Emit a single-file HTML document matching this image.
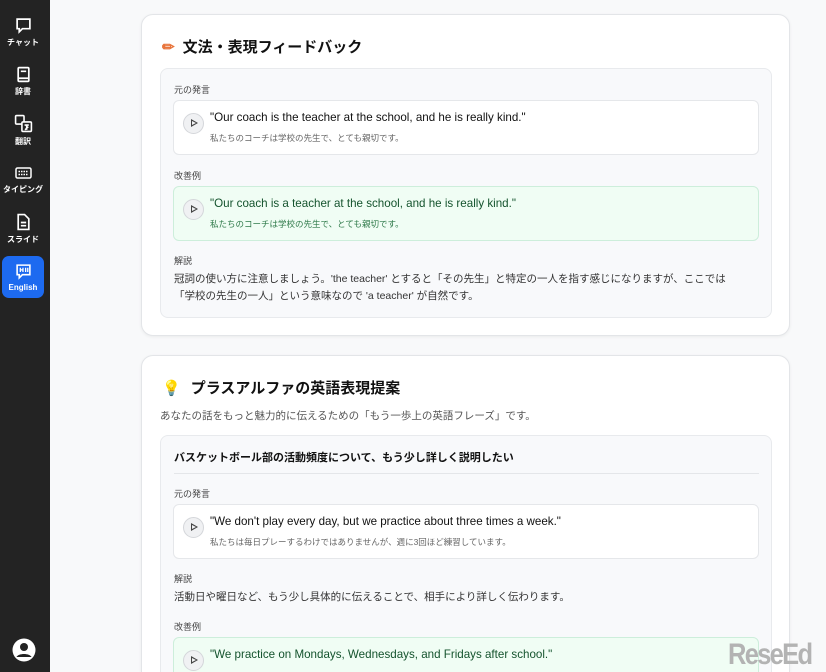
<!DOCTYPE html>
<html><head><meta charset="utf-8"><style>
*{margin:0;padding:0;box-sizing:border-box}
html,body{width:826px;height:672px;overflow:hidden}
body{background:#f8f9fa;font-family:"Liberation Sans","Noto Sans CJK JP",sans-serif;position:relative;color:#222}
.sb{position:absolute;left:0;top:0;width:50px;height:672px;background:#232323}
.ni{position:absolute;left:2px;width:42px;text-align:center;color:#fff;font-size:8px;font-weight:bold}
.ni svg{display:block;margin:0 auto 3px}
.act{background:#1d6af0;border-radius:7px;height:42px;padding-top:7px}
.card{position:absolute;left:141px;width:649px;background:#fff;border:1px solid #e3e5e8;border-radius:12px;box-shadow:0 1px 3px rgba(0,0,0,.06);overflow:hidden}
.h{position:absolute;left:20px;font-size:15px;font-weight:bold;color:#111}
.box{position:absolute;left:18px;width:612px;background:#f8f9fb;border:1px solid #e8eaed;border-radius:8px}
.lbl{position:absolute;left:13px;font-size:9px;color:#444}
.q{position:absolute;left:12px;width:586px;height:55px;background:#fff;border:1px solid #e5e7ea;border-radius:6px}
.q.g{background:#f0fdf4;border-color:#cdeedb}
.pl{position:absolute;left:9px;top:12px;width:21px;height:21px;border-radius:50%;background:#f0f1f3;border:1px solid #d4d6da}
.pl:after{content:"";position:absolute;left:7px;top:5px;border-left:7px solid #444;border-top:4.5px solid transparent;border-bottom:4.5px solid transparent}
.pl:before{content:"";position:absolute;left:8px;top:7px;border-left:4px solid #f0f1f3;border-top:2.5px solid transparent;border-bottom:2.5px solid transparent;z-index:1}
.en{position:absolute;left:36px;top:10px;font-size:11.6px;color:#111}
.jp{position:absolute;left:36px;top:31px;font-size:8.5px;color:#666}
.g .en{color:#14532d}.g .jp{color:#2f7a4a}
.t{position:absolute;left:13px;font-size:10.5px;color:#333;line-height:17px}
</style></head><body>
<div class="sb">
<div class="ni" style="top:17px"><svg width="17" height="17" viewBox="0 0 16 16" fill="none" stroke="#fff" stroke-width="1.6"><path d="M2 2h12v9H7l-3 3v-3H2z"/></svg>チャット</div>
<div class="ni" style="top:66px"><svg width="17" height="17" viewBox="0 0 16 16" fill="none" stroke="#fff" stroke-width="1.6"><rect x="3" y="1.5" width="10" height="13" rx="1"/><path d="M5.5 5h5M3 11.5h10"/></svg>辞書</div>
<div class="ni" style="top:114px"><svg width="19" height="19" viewBox="0 0 18 18" fill="none" stroke="#fff" stroke-width="1.5"><rect x="1.5" y="1.5" width="8" height="8" rx="1"/><rect x="7.5" y="7.5" width="9" height="9" rx="1" fill="#232323"/><path d="M10 10.5h4M12 10v5M10.5 15l3-3"/></svg>翻訳</div>
<div class="ni" style="top:165px"><svg width="19" height="16" viewBox="0 0 18 16" fill="none" stroke="#fff" stroke-width="1.5"><rect x="1.5" y="3" width="15" height="10" rx="1.5"/><path d="M4 6.5h10M4 9.5h10" stroke-dasharray="1.5 1"/></svg>タイピング</div>
<div class="ni" style="top:213px"><svg width="17" height="18" viewBox="0 0 16 17" fill="none" stroke="#fff" stroke-width="1.6"><path d="M3 1.5h6l4 4v10H3z"/><path d="M5.5 9h5M5.5 12h5"/></svg>スライド</div>
<div class="ni act" style="top:256px"><svg width="17" height="17" viewBox="0 0 16 16" fill="none" stroke="#fff" stroke-width="1.5"><path d="M2 2h12v9H7l-3 3v-3H2z"/><path d="M5 4.5v4M7.5 4.5v4M5 6.5h2.5M10 4.5v4M12 4.5v4" stroke-width="1.2"/></svg>English</div>
<svg style="position:absolute;left:12px;top:638px" width="24" height="24" viewBox="0 0 24 24"><circle cx="12" cy="12" r="11.5" fill="#fff"/><circle cx="12" cy="9" r="4" fill="#232323"/><path d="M4.5 19c2-4 13-4 15 0" fill="#232323"/></svg>
</div>

<div class="card" style="top:14px;height:322px">
<div class="h" style="top:21px"><span style="color:#e8743b;margin-right:8px">✏</span>文法・表現フィードバック</div>
<div class="box" style="top:53px;height:250px">
<div class="lbl" style="top:14px">元の発言</div>
<div class="q" style="top:31px"><div class="pl"></div><div class="en">"Our coach is the teacher at the school, and he is really kind."</div><div class="jp">私たちのコーチは学校の先生で、とても親切です。</div></div>
<div class="lbl" style="top:100px">改善例</div>
<div class="q g" style="top:117px"><div class="pl"></div><div class="en">"Our coach is a teacher at the school, and he is really kind."</div><div class="jp">私たちのコーチは学校の先生で、とても親切です。</div></div>
<div class="lbl" style="top:185px">解説</div>
<div class="t" style="top:202px">冠詞の使い方に注意しましょう。'the teacher' とすると「その先生」と特定の一人を指す感じになりますが、ここでは<br>「学校の先生の一人」という意味なので 'a teacher' が自然です。</div>
</div>
</div>

<div class="card" style="top:355px;height:317px;border-bottom:none;border-radius:12px 12px 0 0">
<div class="h" style="top:21px"><span style="color:#f5c33b;margin-right:10px">💡</span>プラスアルファの英語表現提案</div>
<div style="position:absolute;left:18px;top:52px;font-size:10.5px;color:#555">あなたの話をもっと魅力的に伝えるための「もう一歩上の英語フレーズ」です。</div>
<div class="box" style="top:79px;height:260px">
<div style="position:absolute;left:13px;top:13px;font-size:11px;font-weight:bold;color:#111">バスケットボール部の活動頻度について、もう少し詳しく説明したい</div>
<div style="position:absolute;left:13px;right:12px;top:37px;border-top:1px solid #e4e6e9"></div>
<div class="lbl" style="top:51px">元の発言</div>
<div class="q" style="top:68px"><div class="pl"></div><div class="en">"We don't play every day, but we practice about three times a week."</div><div class="jp">私たちは毎日プレーするわけではありませんが、週に3回ほど練習しています。</div></div>
<div class="lbl" style="top:136px">解説</div>
<div class="t" style="top:153px">活動日や曜日など、もう少し具体的に伝えることで、相手により詳しく伝わります。</div>
<div class="lbl" style="top:184px">改善例</div>
<div class="q g" style="top:201px"><div class="pl"></div><div class="en">"We practice on Mondays, Wednesdays, and Fridays after school."</div></div>
</div>
</div>
<div style="position:absolute;left:728px;top:638px;font-size:30px;font-weight:bold;color:#b3b3b3;letter-spacing:-2px;transform:scaleX(.85);transform-origin:left">ReseEd</div>
</body></html>
